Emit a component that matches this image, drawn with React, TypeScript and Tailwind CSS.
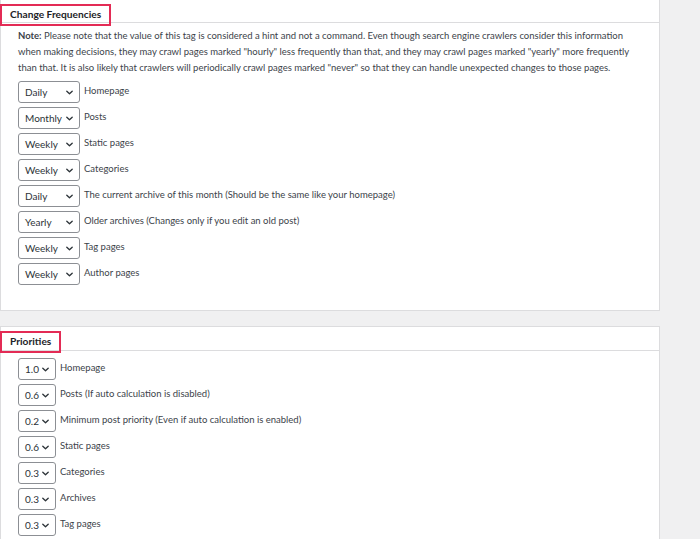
import React from "react";

const Chevron = () => (
  <svg width="7" height="5" viewBox="0 0 7 5" fill="none" className="shrink-0">
    <path d="M0.8 1.2l2.7 2.6 2.7-2.6" stroke="#2c3338" strokeWidth="1.3" strokeLinecap="round" strokeLinejoin="round" />
  </svg>
);

function Row({ value, label, w }: { value: string; label: string; w: "f" | "p" }) {
  return (
    <div className="flex items-start gap-[4px]">
      <div
        className={
          "flex h-[22px] items-center justify-between rounded-[3px] border border-[#8c8f94] bg-white pl-[6px] pr-[6px] " +
          (w === "f" ? "w-[62px]" : "w-[38px]")
        }
      >
        <span className="text-[10px] leading-none text-[#2c3338]">{value}</span>
        <Chevron />
      </div>
      <span className="text-[9.5px] leading-[20px] text-[#3c434a]">{label}</span>
    </div>
  );
}

const freq: [string, string][] = [
  ["Daily", "Homepage"],
  ["Monthly", "Posts"],
  ["Weekly", "Static pages"],
  ["Weekly", "Categories"],
  ["Daily", "The current archive of this month (Should be the same like your homepage)"],
  ["Yearly", "Older archives (Changes only if you edit an old post)"],
  ["Weekly", "Tag pages"],
  ["Weekly", "Author pages"],
];

const prio: [string, string][] = [
  ["1.0", "Homepage"],
  ["0.6", "Posts (If auto calculation is disabled)"],
  ["0.2", "Minimum post priority (Even if auto calculation is enabled)"],
  ["0.6", "Static pages"],
  ["0.3", "Categories"],
  ["0.3", "Archives"],
  ["0.3", "Tag pages"],
];

export default function App() {
  return (
    <div
      className="h-[539px] w-[700px] overflow-hidden bg-[#f0f0f1]"
      style={{ fontFamily: 'Lato, "Noto Sans", sans-serif' }}
    >
      <div className="flex w-[660px] flex-col gap-[15px]">
        <div className="border border-t-0 border-[#dcdcde] bg-white">
          <div className="h-[23px] border-b border-[#dcdcde]">
            <div className="-ml-px inline-flex h-[22px] items-center border-2 border-[#e32b55] px-[8px] text-[10.2px] font-bold text-[#1d2327]">
              Change Frequencies
            </div>
          </div>
          <div className="px-[17px] pb-[25px] pt-[5px]">
            <p className="text-[9.5px] leading-[16px] text-[#3c434a]">
              <span className="font-bold">Note:</span> Please note that the value of this tag is considered a hint and
              not a command. Even though search engine crawlers consider this information when making decisions, they
              may crawl pages marked "hourly" less frequently than that, and they may crawl pages marked "yearly" more
              frequently than that. It is also likely that crawlers will periodically crawl pages marked "never" so that
              they can handle unexpected changes to those pages.
            </p>
            <div className="mt-[5px] flex flex-col gap-[4px]">
              {freq.map(([v, l], i) => (
                <Row key={i} value={v} label={l} w="f" />
              ))}
            </div>
          </div>
        </div>
        <div className="border border-[#dcdcde] bg-white">
          <div className="h-[24px] border-b border-[#dcdcde]">
            <div className="-ml-px inline-flex h-[22px] items-center border-2 border-[#e32b55] px-[8px] text-[10.2px] font-bold text-[#1d2327]">
              Priorities
            </div>
          </div>
          <div className="flex flex-col gap-[4px] px-[17px] pb-[20px] pt-[7px]">
            {prio.map(([v, l], i) => (
              <Row key={i} value={v} label={l} w="p" />
            ))}
          </div>
        </div>
      </div>
    </div>
  );
}
